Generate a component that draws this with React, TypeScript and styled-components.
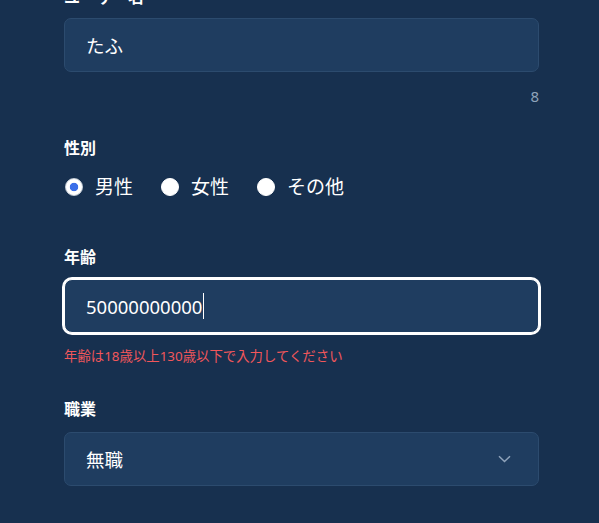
import React from "react";
import styled, { createGlobalStyle } from "styled-components";

const GlobalStyle = createGlobalStyle`
  html, body {
    margin: 0;
    padding: 0;
    background: #17304f;
    overflow: hidden;
  }
  body {
    font-family: "Noto Sans", "Noto Sans CJK JP", sans-serif;
    color: #ffffff;
  }
`;

const genders = ["男性", "女性", "その他"];

const App: React.FC = () => {
  return (
    <>
      <GlobalStyle />
      <Page>
        <Form>
          <Field $mb={31}>
            <Label $mb={10} $lift>
              ユーザー名
            </Label>
            <TextBox>たふ</TextBox>
            <Counter>8</Counter>
          </Field>

          <Field $mb={46}>
            <Label $mb={15}>性別</Label>
            <RadioGroup>
              {genders.map((g, i) => (
                <RadioItem key={g}>
                  <RadioDot $checked={i === 0} />
                  <span>{g}</span>
                </RadioItem>
              ))}
            </RadioGroup>
          </Field>

          <Field $mb={33}>
            <Label $mb={11}>年齢</Label>
            <TextBox $focused>
              50000000000
              <Caret />
            </TextBox>
            <ErrorText>年齢は18歳以上130歳以下で入力してください</ErrorText>
          </Field>

          <Field $mb={0}>
            <Label $mb={12}>職業</Label>
            <SelectBox>
              <span>無職</span>
              <svg width="13" height="8" viewBox="0 0 13 8" fill="none">
                <path
                  d="M1 1.2L6.5 6.5L12 1.2"
                  stroke="#8fa3ba"
                  strokeWidth="1.5"
                />
              </svg>
            </SelectBox>
          </Field>
        </Form>
      </Page>
    </>
  );
};

export default App;

const Page = styled.div`
  width: 599px;
  height: 523px;
  background: #17304f;
  overflow: hidden;
`;

const Form = styled.div`
  width: 475px;
  margin-left: 64px;
  padding-top: 18px;
`;

const Field = styled.div<{ $mb: number }>`
  display: flex;
  flex-direction: column;
  margin-bottom: ${(p) => p.$mb}px;
`;

const Label = styled.div<{ $mb: number; $lift?: boolean }>`
  font-size: 16px;
  font-weight: 700;
  line-height: 22px;
  margin-top: ${(p) => (p.$lift ? "-32px" : "0")};
  margin-bottom: ${(p) => p.$mb}px;
`;

const TextBox = styled.div<{ $focused?: boolean }>`
  box-sizing: border-box;
  height: 54px;
  display: flex;
  align-items: center;
  padding: 0 21px;
  background: #1f3d60;
  border: 1px solid ${(p) => (p.$focused ? "#ffffff" : "#2c4b6e")};
  border-radius: ${(p) => (p.$focused ? "8px" : "7px")};
  box-shadow: ${(p) => (p.$focused ? "0 0 0 2px #ffffff" : "none")};
  font-size: 18.5px;
  color: #ffffff;
`;

const Caret = styled.span`
  display: inline-block;
  width: 1px;
  height: 26px;
  margin-left: 1px;
  background: #ffffff;
`;

const Counter = styled.div`
  align-self: flex-end;
  margin-top: 14px;
  font-size: 15px;
  line-height: 20px;
  color: #8fa3ba;
`;

const RadioGroup = styled.div`
  display: flex;
  align-items: center;
  gap: 28px;
  padding-left: 1px;
`;

const RadioItem = styled.label`
  display: flex;
  align-items: center;
  gap: 12px;
  font-size: 19px;
  line-height: 26px;
`;

const RadioDot = styled.span<{ $checked: boolean }>`
  box-sizing: border-box;
  width: 18px;
  height: 18px;
  border-radius: 50%;
  background: ${(p) =>
    p.$checked
      ? "radial-gradient(circle, #3a6ee8 0 3.8px, #ffffff 4.6px)"
      : "#ffffff"};
  border: 1px solid ${(p) => (p.$checked ? "#c8d0da" : "#ffffff")};
`;

const ErrorText = styled.div`
  margin-top: 14px;
  font-size: 13.4px;
  line-height: 18px;
  color: #f2575b;
`;

const SelectBox = styled.div`
  box-sizing: border-box;
  height: 54px;
  display: flex;
  align-items: center;
  justify-content: space-between;
  padding: 0 27px 0 21px;
  background: #1f3d60;
  border: 1px solid #2c4b6e;
  border-radius: 7px;
  font-size: 18.5px;
`;
